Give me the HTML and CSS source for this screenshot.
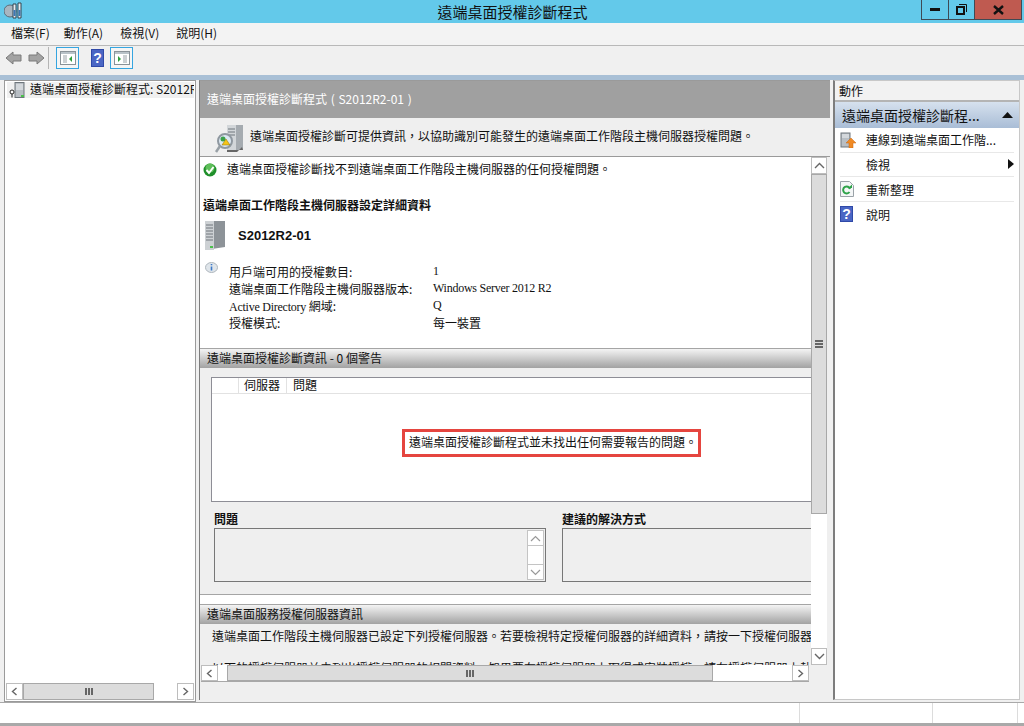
FILE: index.html
```html
<!DOCTYPE html>
<html>
	<head>
		<meta charset="utf-8">
		<title>遠端桌面授權診斷程式</title>
		<link rel="stylesheet" href="styles.css">
	</head>
	<body>
	<div class="window">
		<div class="titlebar">
			<svg class="app_icon" width="21" height="17" viewBox="0 0 21 17">
				<ellipse cx="6" cy="9" rx="6" ry="6" fill="#a9b6c0" stroke="#5e6c78"/>
				<path d="M9 2 H12 V16 H9 Z M14 1 H17 V16 H14 Z" fill="#e8eef2" stroke="#33424f"/>
				<path d="M10.5 8 V14 M15.5 8 V14" stroke="#3c78b5" stroke-width="2"/>
			</svg>
			<div class="title">遠端桌面授權診斷程式</div>
			<div class="winbtns">
				<div class="winbtn min"><svg width="10" height="4"><rect width="10" height="3" fill="#111"/></svg></div>
				<div class="winbtn max"><svg width="11" height="11" viewBox="0 0 11 11"><path d="M3 .5 H10.5 V8" fill="none" stroke="#111"/><rect x="1" y="3" width="7" height="7" fill="none" stroke="#111" stroke-width="2"/></svg></div>
				<div class="winbtn close"><svg width="11" height="10" viewBox="0 0 11 10"><path d="M1 1 L10 9 M10 1 L1 9" stroke="#111" stroke-width="2.4"/></svg></div>
			</div>
		</div>
		<ul class="menu">
			<li>檔案(F)</li>
			<li>動作(A)</li>
			<li>檢視(V)</li>
			<li>說明(H)</li>
		</ul>
		<div class="toolbar">
			<svg class="tool_arrow" width="17" height="14" viewBox="0 0 17 14"><path d="M1 7 L8 1 V4 H16 V10 H8 V13 Z" fill="#a3a3a3" stroke="#7a7a7a"/></svg>
			<svg class="tool_arrow" width="17" height="14" viewBox="0 0 17 14"><path d="M16 7 L9 1 V4 H1 V10 H9 V13 Z" fill="#a3a3a3" stroke="#7a7a7a"/></svg>
			<span class="tool_sep"></span>
			<span class="tool_btn">
				<svg width="16" height="14" viewBox="0 0 16 14"><rect x=".5" y=".5" width="15" height="13" fill="#fff" stroke="#8a9298"/><rect x="1" y="1" width="14" height="2" fill="#b9c2c8"/><path d="M3 5 H7 M3 7 H7 M3 9 H7 M3 11 H7" stroke="#9aa2a8"/><path d="M12 5 L9 8 L12 11 Z" fill="#2f9e3a"/></svg>
			</span>
			<svg class="tool_help" width="13" height="18" viewBox="0 0 13 18"><rect width="13" height="18" fill="#2f49a8"/><rect x="1" y="1" width="11" height="16" fill="#4a66c4"/><text x="6.5" y="14" class="help_q" text-anchor="middle">?</text></svg>
			<span class="tool_btn">
				<svg width="16" height="14" viewBox="0 0 16 14"><rect x=".5" y=".5" width="15" height="13" fill="#fff" stroke="#8a9298"/><rect x="1" y="1" width="14" height="2" fill="#b9c2c8"/><path d="M9 5 H13 M9 7 H13 M9 9 H13 M9 11 H13" stroke="#9aa2a8"/><path d="M4 5 L7 8 L4 11 Z" fill="#2f9e3a"/></svg>
			</span>
		</div>
		<div class="panes">
			<div class="tree">
				<div class="tree_body">
					<div class="tree_item">
						<svg width="17" height="16" viewBox="0 0 17 16"><rect x="6" y="0.5" width="9" height="15" fill="#b8bec4" stroke="#6e767c"/><path d="M7 3 H14 M7 5 H14 M7 7 H14" stroke="#eef1f3"/><rect x="12" y="13" width="3" height="2" fill="#4cc04c"/><circle cx="3" cy="10" r="2" fill="#fff" stroke="#222"/><path d="M3 12 V15.5" stroke="#222"/></svg>
						<span class="tree_text">遠端桌面授權診斷程式: S2012R2-01</span>
					</div>
				</div>
				<div class="hbar tree_hbar">
					<span class="sb_btn"><svg width="9" height="9" viewBox="0 0 9 9"><path d="M6.5 1 L2.5 4.5 L6.5 8" fill="none" stroke="#666" stroke-width="1.4"/></svg></span>
					<span class="sb_thumb tree_thumb"><span class="grip_v"></span></span>
					<span class="sb_track"></span>
					<span class="sb_btn"><svg width="9" height="9" viewBox="0 0 9 9"><path d="M2.5 1 L6.5 4.5 L2.5 8" fill="none" stroke="#666" stroke-width="1.4"/></svg></span>
				</div>
			</div>
			<div class="center">
				<div class="center_head">遠端桌面授權診斷程式 ( S2012R2-01 )</div>
				<div class="center_desc">
					<svg class="desc_icon" width="30" height="28" viewBox="0 0 30 28"><path d="M12 0 H28 V25 L12 25 Z" fill="#a5abb0"/><rect x="12" y="0" width="9" height="25" fill="#d2d6d9"/><path d="M13 4 H20 M13 7 H20 M13 10 H20" stroke="#6e767c"/><path d="M27 22 L22 27 H12 V25 H28 Z" fill="#666"/><circle cx="10" cy="16" r="7" fill="#dce8f2" stroke="#8f98a0" stroke-width="2"/><path d="M5 21 L1 27" stroke="#98a0a6" stroke-width="2.5"/><circle cx="8" cy="14" r="2.5" fill="#3aa04a"/><path d="M11 14 L15 20 H7 Z" fill="#f5c518" stroke="#8a6d00" stroke-width=".5"/></svg>
					<span class="desc_text">遠端桌面授權診斷可提供資訊，以協助識別可能發生的遠端桌面工作階段主機伺服器授權問題。</span>
				</div>
				<div class="center_scroll">
					<div class="scroll_view">
						<div class="scroll_content">
							<div class="status_line">
								<svg width="14" height="14" viewBox="0 0 14 14"><circle cx="7" cy="7" r="6.5" fill="#1f8f2a"/><circle cx="7" cy="5" r="4.5" fill="#5fbf5a"/><path d="M3.5 7 L6 10 L10.5 4" fill="none" stroke="#fff" stroke-width="2"/></svg>
								<span>遠端桌面授權診斷找不到遠端桌面工作階段主機伺服器的任何授權問題。</span>
							</div>
							<div class="detail_title">遠端桌面工作階段主機伺服器設定詳細資料</div>
							<div class="server_line">
								<svg width="21" height="30" viewBox="0 0 21 30"><path d="M0 1 H20 V27 L0 30 Z" fill="#8d9398"/><rect x="0" y="1" width="9" height="29" fill="#cdd1d4"/><path d="M1 5 H8 M1 8 H8 M1 11 H8 M1 14 H8 M1 17 H8 M1 20 H8" stroke="#70777c"/><rect x="5" y="26" width="3" height="2" fill="#4cc04c"/></svg>
								<span class="server_name">S2012R2-01</span>
							</div>
							<div class="info_block">
								<svg class="info_icon" width="13" height="12" viewBox="0 0 13 12"><ellipse cx="6.5" cy="5.5" rx="6" ry="5" fill="#dfe5ea" stroke="#aeb6bd"/><path d="M6.5 2 V3.2 M6.5 4.5 V8.5" stroke="#3c78c8" stroke-width="1.6"/></svg>
								<dl class="info_rows">
									<dt>用戶端可用的授權數目:</dt><dd class="serif">1</dd>
									<dt>遠端桌面工作階段主機伺服器版本:</dt><dd class="serif">Windows Server 2012 R2</dd>
									<dt><span class="serif">Active Directory</span> 網域:</dt><dd class="serif">Q</dd>
									<dt>授權模式:</dt><dd>每一裝置</dd>
								</dl>
							</div>
							<div class="section_head first">遠端桌面授權診斷資訊 - 0 個警告</div>
							<div class="section_body">
								<div class="listbox">
									<div class="list_head">
										<span class="col_blank"></span>
										<span class="col_server">伺服器</span>
										<span>問題</span>
									</div>
									<div class="list_msg"><span class="red_box">遠端桌面授權診斷程式並未找出任何需要報告的問題。</span></div>
								</div>
								<div class="two_cols">
									<div class="col_problem">
										<div class="col_label">問題</div>
										<div class="col_box">
											<div class="mini_bar">
												<span class="mini_btn"><svg width="11" height="7" viewBox="0 0 11 7"><path d="M1 6 L5.5 1.5 L10 6" fill="none" stroke="#999" stroke-width="1.2"/></svg></span>
												<span class="mini_btn mid"></span>
												<span class="mini_btn"><svg width="11" height="7" viewBox="0 0 11 7"><path d="M1 1 L5.5 5.5 L10 1" fill="none" stroke="#999" stroke-width="1.2"/></svg></span>
											</div>
										</div>
									</div>
									<div class="col_fix">
										<div class="col_label">建議的解決方式</div>
										<div class="col_box"></div>
									</div>
								</div>
							</div>
							<div class="section_gap"></div>
							<div class="section_head">遠端桌面服務授權伺服器資訊</div>
							<div class="section_text">
								<p>遠端桌面工作階段主機伺服器已設定下列授權伺服器。若要檢視特定授權伺服器的詳細資料，請按一下授權伺服器。</p>
								<p class="cut_line">以下的授權伺服器並未列出授權伺服器的相關資料，如果要在授權伺服器上取得或安裝授權，請在授權伺服器上執行。</p>
							</div>
						</div>
						<div class="vbar">
							<span class="sb_btn_v"><svg width="11" height="7" viewBox="0 0 11 7"><path d="M1 6 L5.5 1.5 L10 6" fill="none" stroke="#666" stroke-width="1.4"/></svg></span>
							<span class="sb_thumb_v"><span class="grip_h"></span></span>
							<span class="sb_track_v"></span>
							<span class="sb_btn_v"><svg width="11" height="7" viewBox="0 0 11 7"><path d="M1 1 L5.5 5.5 L10 1" fill="none" stroke="#666" stroke-width="1.4"/></svg></span>
						</div>
					</div>
					<div class="hbar center_hbar">
						<span class="sb_btn"><svg width="9" height="9" viewBox="0 0 9 9"><path d="M6.5 1 L2.5 4.5 L6.5 8" fill="none" stroke="#666" stroke-width="1.4"/></svg></span>
						<span class="sb_track small"></span>
						<span class="sb_thumb center_thumb"><span class="grip_v"></span></span>
						<span class="sb_track"></span>
						<span class="sb_btn"><svg width="9" height="9" viewBox="0 0 9 9"><path d="M2.5 1 L6.5 4.5 L2.5 8" fill="none" stroke="#666" stroke-width="1.4"/></svg></span>
					</div>
				</div>
			</div>
			<div class="actions">
				<div class="actions_head">動作</div>
				<div class="actions_group">
					<span>遠端桌面授權診斷程...</span>
					<svg width="11" height="6" viewBox="0 0 11 6"><path d="M0 6 L5.5 0 L11 6 Z" fill="#111"/></svg>
				</div>
				<div class="action_item">
					<svg width="16" height="16" viewBox="0 0 16 16"><rect x="1" y="1" width="9" height="14" fill="#b8bec4" stroke="#6e767c"/><path d="M2 3 H9 M2 5 H9" stroke="#eef1f3"/><path d="M11 6 L16 11 H13 V16 H9 V11 H6 Z" fill="#f08a24" stroke="#c86410" stroke-width=".5"/></svg>
					<span>連線到遠端桌面工作階...</span>
				</div>
				<div class="action_item">
					<span class="no_icon"></span>
					<span>檢視</span>
					<svg class="sub_arrow" width="6" height="10" viewBox="0 0 6 10"><path d="M0 0 L6 5 L0 10 Z" fill="#111"/></svg>
				</div>
				<div class="action_item">
					<svg width="14" height="16" viewBox="0 0 14 16"><path d="M.5 .5 H9.5 L13.5 4.5 V15.5 H.5 Z" fill="#f4f6f7" stroke="#9aa2a8"/><path d="M10 8 A3.5 3.5 0 1 0 9.5 11" fill="none" stroke="#2fa34a" stroke-width="2"/><path d="M8 7 H12 V3.5 Z" fill="#2fa34a"/></svg>
					<span>重新整理</span>
				</div>
				<div class="action_item last">
					<svg width="13" height="16" viewBox="0 0 13 16"><rect width="13" height="16" fill="#2f49a8"/><rect x="1" y="1" width="11" height="14" fill="#4a66c4"/><text x="6.5" y="13" class="help_q" text-anchor="middle">?</text></svg>
					<span>說明</span>
				</div>
			</div>
		</div>
		<div class="statusbar">
			<span class="stat_main"></span>
			<span class="stat_mid"></span>
			<span class="stat_end"></span>
			<span class="stat_tail"></span>
		</div>
	</div>
	</body>
</html>
```

FILE: styles.css
```css
*{ margin: 0; padding: 0; box-sizing: border-box; list-style-type: none; }
html,body{ height: 100%; overflow: hidden; }
body{ font-family: "Noto Sans CJK TC", "Liberation Sans", sans-serif; font-size: 12px; color: #111; background-color: #a9a9a9; }
.serif{ font-family: "Liberation Serif", "Noto Sans CJK TC", serif; letter-spacing: -0.25px; }
.help_q{ font: bold 14px "Liberation Sans", sans-serif; fill: #fff; }
.window{ height: 723px; display: flex; flex-direction: column; background-color: #f0f0f0; }

/*标题栏*/
.titlebar{ height: 23px; background-color: #63c9ea; display: flex; align-items: flex-start; position: relative; flex: none; }
.app_icon{ margin: 2px 0 0 4px; }
.title{ position: absolute; left: 1px; right: 0; top: 0; text-align: center; font-size: 15px; line-height: 23px; color: #111; }
.winbtns{ margin-left: auto; margin-right: 2px; display: flex; height: 20px; border: 1px solid #3e4a55; border-top: 0; position: relative; }
.winbtn{ display: flex; align-items: center; justify-content: center; }
.winbtn.min{ width: 27px; border-right: 1px solid #3e4a55; }
.winbtn.max{ width: 26px; border-right: 1px solid #3e4a55; }
.winbtn.close{ width: 46px; background-color: #bf5a50; }

/*菜单*/
.menu{ height: 23px; flex: none; display: flex; padding-left: 11px; line-height: 20px; border-bottom: 1px solid #b8b8b8; background-color: #f3f3f3; }
.menu li{ margin-right: 17px; }
.menu li:first-child{ margin-right: 14px; }
.toolbar{ height: 29px; flex: none; display: flex; align-items: center; padding: 0 0 5px 5px; background-color: #f0f0f0; }
.tool_arrow{ margin-right: 6px; }
.tool_arrow + .tool_arrow{ margin-right: 3px; }
.tool_sep{ width: 1px; height: 22px; background-color: #b5b5b5; margin: 0 7px 0 0; }
.tool_btn{ width: 23px; height: 22px; border: 1px solid #35a5e0; display: flex; align-items: center; justify-content: center; background-color: #f5f5f5; }
.tool_help{ margin: 0 6px 0 12px; }

/*三栏*/
.panes{ height: 627px; flex: none; display: flex; padding: 5px 4px 0 4px; background: linear-gradient(#a9c0d6 5px, #f0f0f0 5px); }
.tree{ width: 192px; flex: none; border: 1px solid #9a9a9a; background-color: #fff; display: flex; flex-direction: column; height: 622px; }
.tree_body{ flex: 1; overflow: hidden; padding: 1px 1px 0 2px; }
.tree_item{ display: flex; align-items: center; gap: 4px; height: 16px; padding-left: 2px; background-color: #f0f0f0; white-space: nowrap; overflow: hidden; }
.tree_item svg{ flex: none; }
.tree_text{ line-height: 14px; height: 16px; }
.hbar{ display: flex; height: 17px; flex: none; }
.tree_hbar{ margin: 0 1px 1px 1px; }
.sb_btn{ width: 17px; flex: none; border: 1px solid #bdbdbd; background-color: #fff; display: flex; align-items: center; justify-content: center; }
.sb_thumb{ background-color: #dcdcdc; border: 1px solid #a8a8a8; display: flex; align-items: center; justify-content: center; }
.tree_thumb{ width: 131px; }
.center_thumb{ width: 486px; }
.sb_track{ flex: 1; background-color: #fff; }
.sb_track.small{ flex: none; width: 9px; }
.grip_v{ width: 8px; height: 7px; background: repeating-linear-gradient(90deg, #666 0 2px, transparent 2px 3px); }
.grip_h{ width: 8px; height: 8px; background: repeating-linear-gradient(0deg, #666 0 2px, transparent 2px 3px); }

.center{ width: 631px; flex: none; margin-left: 3px; border-left: 1px solid #7d7d7d; border-top: 1px solid #9a9a9a; display: flex; flex-direction: column; height: 620px; background-color: #efefef; }
.center_head{ height: 37px; flex: none; background-color: #a0a0a0; color: #fff; padding-left: 7px; line-height: 35px; font-size: 12px; word-spacing: 1px; }
.center_desc{ height: 39px; flex: none; display: flex; align-items: center; gap: 5px; padding-left: 15px; border-bottom: 1px solid #9a9a9a; }
.desc_icon{ margin-top: 3px; }
.desc_text{ margin-bottom: 3px; }
.center_scroll{ flex: 1; display: flex; flex-direction: column; min-height: 0; }
.scroll_view{ height: 508px; flex: none; display: flex; }
.scroll_content{ width: 611px; flex: none; overflow: hidden; background-color: #fff; }
.vbar{ width: 16px; flex: none; display: flex; flex-direction: column; }
.sb_btn_v{ height: 17px; flex: none; border: 1px solid #bdbdbd; background-color: #fff; display: flex; align-items: center; justify-content: center; }
.sb_thumb_v{ height: 340px; flex: none; background-color: #dcdcdc; border: 1px solid #a8a8a8; display: flex; align-items: center; justify-content: center; }
.sb_track_v{ flex: 1; background-color: #fff; }
.center_hbar{ width: 608px; margin-left: 1px; border-bottom: 1px solid #a8a8a8; }

.status_line{ display: flex; align-items: center; gap: 10px; height: 20px; margin-top: 1px; padding-left: 3px; }
.status_line svg{ margin-top: 4px; }
.detail_title{ font-weight: 700; margin: 18px 0 0 3px; line-height: 18px; }
.server_line{ display: flex; align-items: center; gap: 12px; margin: 6px 0 0 5px; height: 30px; }
.server_name{ font: bold 13px "Liberation Sans", sans-serif; }
.info_block{ display: flex; margin: 11px 0 0 5px; }
.info_icon{ flex: none; margin-top: 1px; }
.info_rows{ display: grid; grid-template-columns: 204px auto; grid-auto-rows: 17px; margin-left: 11px; margin-top: 2px; line-height: 17px; }
.section_head{ height: 20px; line-height: 17px; padding-left: 7px; background: linear-gradient(#f4f4f4, #a2a2a2); border-top: 1px solid #a5a5a5; }
.section_head.first{ margin-top: 17px; }
.section_body{ height: 227px; background-color: #efefef; padding: 9px 0 0 11px; border-bottom: 1px solid #a5a5a5; }
.listbox{ height: 125px; background-color: #fff; border: 1px solid #8e8e96; border-right: 0; margin-right: -4px; }
.list_head{ display: flex; height: 16px; line-height: 13px; border-bottom: 1px solid #e2e2e2; }
.list_head span{ border-right: 1px solid #e2e2e2; padding-right: 0; }
.list_head span:last-child{ border-right: 0; padding-left: 6px; }
.col_blank{ width: 26px; margin-left: 1px; }
.col_server{ width: 48px; padding-left: 5px; }
.list_msg{ padding: 35px 0 0 190px; }
.red_box{ display: inline-block; width: 299px; height: 28px; border: 3px solid #e5453f; line-height: 19px; padding-left: 4px; background-color: #fff; white-space: nowrap; }
.two_cols{ display: flex; margin-top: 9px; margin-left: 3px; }
.col_label{ font-weight: 700; line-height: 15px; height: 17px; }
.col_problem{ width: 332px; flex: none; margin-right: 16px; }
.col_fix{ width: 260px; flex: none; }
.col_box{ height: 54px; border: 1px solid #777; padding: 1px 1px 1px 0; display: flex; justify-content: flex-end; }
.col_fix .col_box{ border-right: 0; }
.mini_bar{ width: 17px; display: flex; flex-direction: column; }
.mini_btn{ height: 16px; border: 1px solid #c4c4c4; background-color: #fff; display: flex; align-items: center; justify-content: center; flex: none; }
.mini_btn.mid{ height: 18px; border-top: 0; border-bottom: 0; }
.section_gap{ height: 9px; background-color: #fff; }
.section_text{ background-color: #efefef; height: 60px; padding: 3px 0 0 12px; line-height: 18px; white-space: nowrap; overflow: hidden; }
.cut_line{ margin-top: 14px; }

.actions{ width: 187px; flex: none; margin-left: 3px; border: 1px solid #c8c8c8; border-left: 2px solid #7d7d7d; height: 620px; background-color: #fff; }
.actions_head{ height: 21px; line-height: 20px; padding-left: 4px; background-color: #f2f2f2; border-bottom: 2px solid #b4b4b4; }
.actions_group{ height: 26px; display: flex; align-items: center; justify-content: space-between; padding: 0 6px 0 7px; font-size: 14px; background: linear-gradient(#d6e1ee, #a9bdd6); }
.action_item{ height: 24.67px; margin: 0 5px 0 5px; display: grid; grid-template-columns: 16px 1fr auto; column-gap: 10px; align-items: center; border-bottom: 1px solid #e8e8e8; }
.action_item.last{ border-bottom: 0; }
.no_icon{ width: 16px; }

.statusbar{ flex: 1; display: flex; background-color: #fff; border-top: 1px solid #a9a9a9; }
.stat_main{ flex: 1; }
.stat_mid{ width: 133px; border-left: 1px solid #dcdcdc; }
.stat_end{ width: 85px; border-left: 1px solid #dcdcdc; }
.stat_tail{ width: 7px; border-left: 1px solid #dcdcdc; }
```
